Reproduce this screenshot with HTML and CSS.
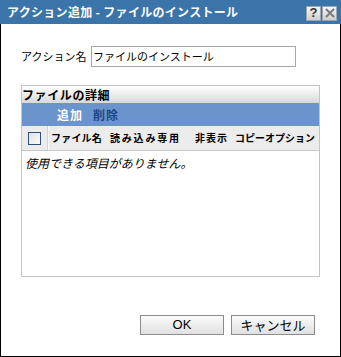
FILE: index.html
```html
<!DOCTYPE html>
<html lang="ja">
<head>
<meta charset="utf-8">
<title>アクション追加</title>
<link rel="stylesheet" href="styles.css">
</head>
<body>
<div class="dialog">
  <div class="titlebar">
    <span class="title">アクション追加 - ファイルのインストール</span>
    <div class="tb-buttons">
      <span class="tb-btn help">?</span>
      <span class="tb-btn close"><svg width="10" height="10" viewBox="0 0 10 10"><path d="M1 1 L9 9 M9 1 L1 9" stroke="#7a7a7a" stroke-width="2" fill="none"/></svg></span>
    </div>
  </div>
  <div class="body">
    <div class="name-row">
      <span class="name-label">アクション名</span>
      <div class="name-input">ファイルのインストール</div>
    </div>
    <div class="section">
      <div class="section-head">ファイルの詳細</div>
      <div class="toolbar"><span class="tool add">追加</span><span class="tool del">削除</span></div>
      <div class="cols">
        <div class="col-check"><span class="checkbox"></span></div>
        <div class="col-names">
          <span class="col c-name">ファイル名</span>
          <span class="col c-ro">読み込み専用</span>
          <span class="col c-hidden">非表示</span>
          <span class="col c-copy">コピーオプション</span>
        </div>
      </div>
      <div class="empty">使用できる項目がありません。</div>
    </div>
    <div class="actions">
      <button class="btn ok">OK</button>
      <button class="btn">キャンセル</button>
    </div>
  </div>
</div>
</body>
</html>
```
FILE: styles.css
```css
html, body {
  margin: 0;
  padding: 0;
  background: #fff;
}
body {
  font-family: "Noto Sans CJK JP", "Liberation Sans", sans-serif;
  color: #000;
}
.dialog {
  width: 341px;
  height: 357px;
  box-sizing: border-box;
  display: flex;
  flex-direction: column;
}
.titlebar {
  height: 24px;
  flex: none;
  background: #3a74a8;
  display: flex;
  align-items: center;
  justify-content: space-between;
  padding: 0 4px 0 7px;
  color: #fff;
}
.title {
  font-size: 12px;
  font-weight: bold;
  letter-spacing: 0.3px;
  line-height: 24px;
  white-space: nowrap;
}
.tb-buttons {
  display: flex;
  gap: 1px;
  margin-top: 2px;
}
.tb-btn {
  width: 15px;
  height: 15px;
  box-sizing: border-box;
  border: 1px solid #9aa6b2;
  background: linear-gradient(#f6f6f6, #cfcfcf);
  display: flex;
  align-items: center;
  justify-content: center;
}
.help {
  font-family: "Liberation Sans", sans-serif;
  font-weight: bold;
  font-size: 13px;
  color: #333;
  line-height: 14px;
}
.body {
  flex: 1;
  border: 1px solid #000;
  border-top: none;
  padding: 22px 20px 21px 20px;
  display: flex;
  flex-direction: column;
}
.name-row {
  display: flex;
  align-items: center;
  height: 21px;
}
.name-label {
  width: 70px;
  font-size: 11px;
  line-height: 21px;
  white-space: nowrap;
}
.name-input {
  width: 205px;
  height: 21px;
  box-sizing: border-box;
  border: 1px solid #a8a8a8;
  font-size: 11px;
  line-height: 19px;
  padding-left: 1px;
  white-space: nowrap;
}
.section {
  margin-top: 18px;
  height: 192px;
  box-sizing: border-box;
  border: 1px solid #c4c4c4;
  display: flex;
  flex-direction: column;
}
.section-head {
  height: 17px;
  background: linear-gradient(#ffffff, #d9d9d9);
  font-size: 12px;
  font-weight: bold;
  letter-spacing: 0.6px;
  line-height: 17px;
  white-space: nowrap;
}
.toolbar {
  height: 23px;
  background: #6a94cb;
  display: flex;
  align-items: center;
  padding-left: 35px;
  gap: 10px;
  font-size: 12px;
  font-weight: bold;
  letter-spacing: 1px;
}
.add { color: #fff; }
.del { color: #1a4788; }
.cols {
  height: 25px;
  box-sizing: border-box;
  background: #ececec;
  border-bottom: 1px solid #c8c8c8;
  display: flex;
  align-items: stretch;
}
.col-check {
  width: 26px;
  box-sizing: border-box;
  border-right: 1px solid #d4d4d4;
  box-shadow: 1px 0 0 #fafafa;
  display: flex;
  align-items: center;
  padding-left: 6px;
}
.checkbox {
  width: 13px;
  height: 13px;
  box-sizing: border-box;
  border: 1px solid #2d5078;
  background: linear-gradient(135deg, #e2e2e2, #fbfbfb);
}
.col-names {
  display: flex;
  padding-left: 3px;
  font-size: 10px;
  font-weight: bold;
  line-height: 24px;
  white-space: nowrap;
  overflow: hidden;
}
.c-name { width: 59px; letter-spacing: 0.2px; }
.c-ro { width: 85px; letter-spacing: 1.8px; }
.c-hidden { width: 40px; letter-spacing: 1px; }
.c-copy { letter-spacing: 0; }
.empty {
  font-size: 12px;
  font-style: italic;
  padding-left: 3px;
  line-height: 23px;
  white-space: nowrap;
}
.actions {
  margin-top: auto;
  display: flex;
  justify-content: flex-end;
  gap: 7px;
  margin-right: 5px;
}
.btn {
  width: 84px;
  height: 20px;
  box-sizing: border-box;
  border: 1px solid #8c8c8c;
  background: linear-gradient(#fbfbfb, #e0e0e0);
  font-family: "Noto Sans CJK JP", sans-serif;
  font-size: 13px;
  line-height: 18px;
  padding: 0;
  color: #000;
}
.ok {
  font-family: "Liberation Sans", sans-serif;
  font-size: 13px;
}
```
